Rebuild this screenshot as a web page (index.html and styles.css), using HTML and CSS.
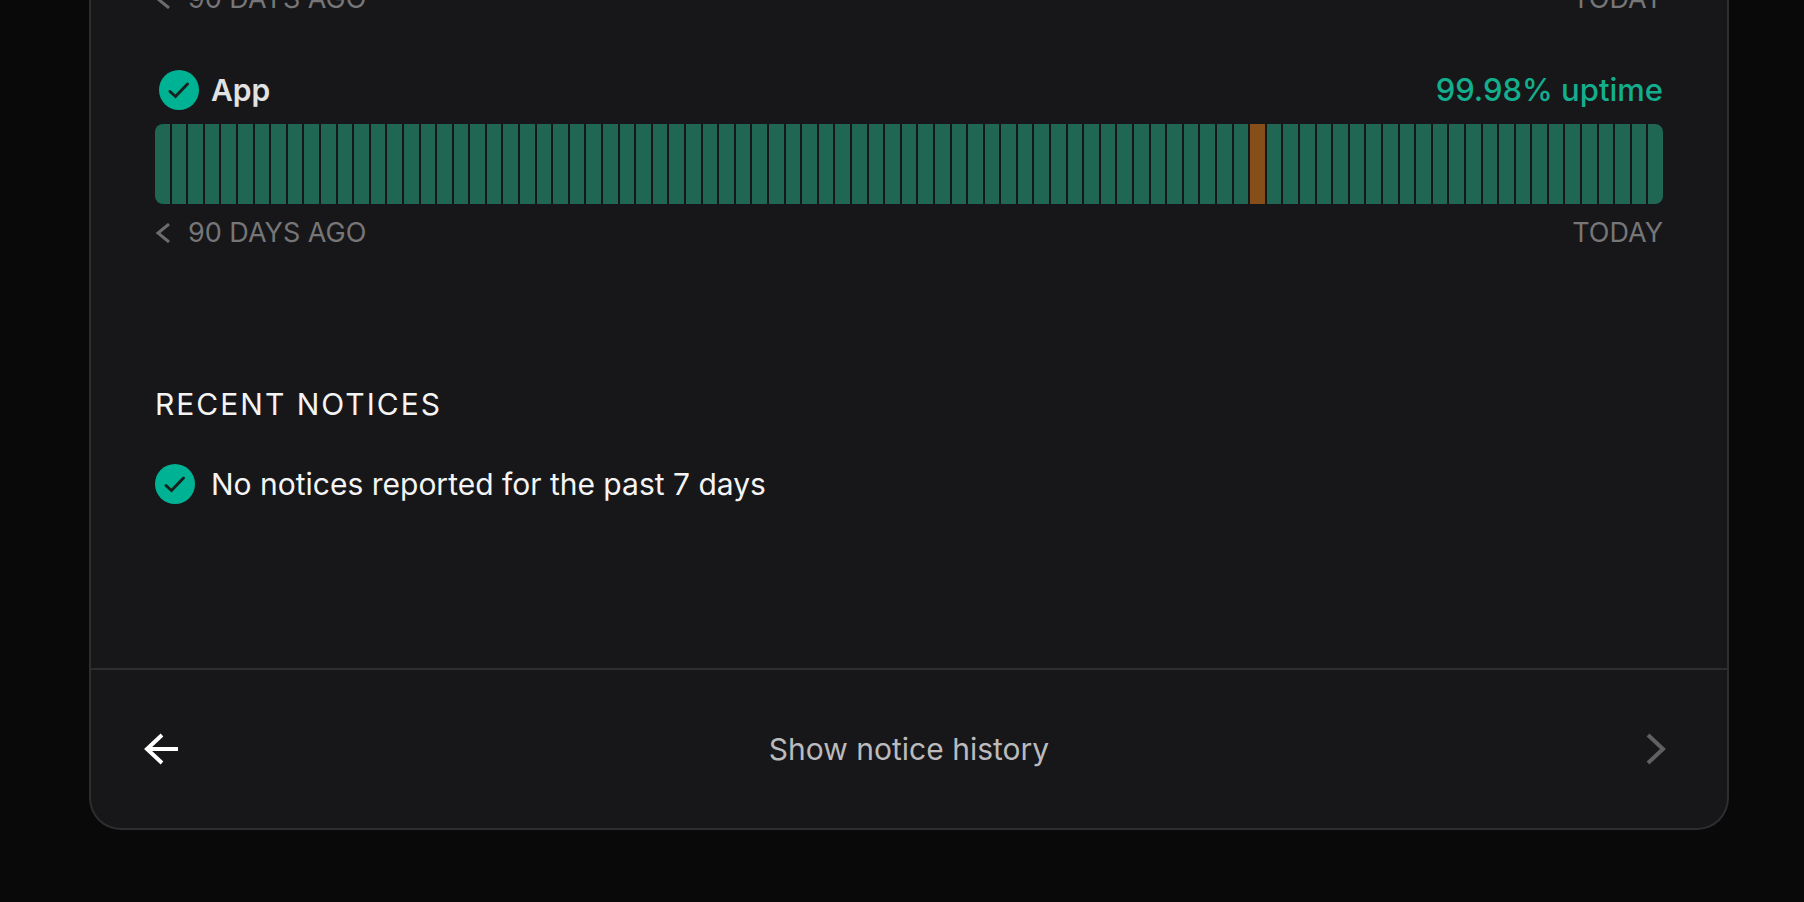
FILE: index.html
```html
<!DOCTYPE html>
<html lang="en">
<head>
    <meta charset="UTF-8">
    <meta name="viewport" content="width=device-width, initial-scale=1.0">
    <title>System status</title>
    <link rel="stylesheet" href="styles.css">
</head>
<body>
    <main class="panel">
        <div class="panel-body">
            <div class="legend">
                <span class="legend-start">
                    <svg class="legend-icon" viewBox="0 0 16 20" aria-hidden="true"><path d="M14 1 3 10l11 9"/></svg>
                    90 DAYS AGO
                </span>
                <span>TODAY</span>
            </div>

            <section class="component">
                <div class="component-header">
                    <svg class="status-icon" viewBox="0 0 40 40" aria-hidden="true"><circle cx="20" cy="20" r="20"/><path d="m11 21.500 5.500 5L28.500 14"/></svg>
                    <h2 class="component-name">App</h2>
                    <span class="uptime">99.98% uptime</span>
                </div>
                <div class="bars" id="app-bars"></div>
                <div class="legend">
                    <span class="legend-start">
                        <svg class="legend-icon" viewBox="0 0 16 20" aria-hidden="true"><path d="M14 1 3 10l11 9"/></svg>
                        90 DAYS AGO
                    </span>
                    <span>TODAY</span>
                </div>
            </section>

            <section class="notices">
                <h2 class="notices-title">RECENT NOTICES</h2>
                <p class="notice">
                    <svg class="status-icon" viewBox="0 0 40 40" aria-hidden="true"><circle cx="20" cy="20" r="20"/><path d="m11 21.500 5.500 5L28.500 14"/></svg>
                    No notices reported for the past 7 days
                </p>
            </section>
        </div>

        <footer class="panel-footer">
            <button class="nav-button" type="button" aria-label="Back">
                <svg class="arrow" viewBox="0 0 36 32" aria-hidden="true"><path d="M19 2 4 16l15 14M4 16h31"/></svg>
            </button>
            <a class="history-link" href="#history">Show notice history</a>
            <button class="nav-button next" type="button" aria-label="Next">
                <svg class="chevron" viewBox="0 0 20 32" aria-hidden="true"><path d="M2 2 17 16 2 30"/></svg>
            </button>
        </footer>
    </main>

    <script>
        // One bar per day, oldest first
        const days = 91;
        const degraded = [66];
        const bars = document.getElementById('app-bars');

        for (let i = 0; i < days; i++) {
            const bar = document.createElement('div');
            bar.className = degraded.includes(i) ? 'bar degraded' : 'bar';
            bars.appendChild(bar);
        }
    </script>
</body>
</html>
```
FILE: styles.css
```css
* {
    box-sizing: border-box;
}
body {
    margin: 0;
    padding: 0 75px 72px 89px;
    overflow: hidden;
    background: #09090a;
    color: #f4f4f5;
    font-family: Inter, sans-serif;
    font-size: 30px;
    line-height: 44px;
}
h2, p {
    margin: 0;
    font-size: 30px;
}
.panel {
    margin-top: -18px;
    background: #171719;
    border: 2px solid #2e2e30;
    border-top: 0;
    border-radius: 0 0 32px 32px;
}
.panel-body {
    padding: 0 64px 162px;
}
.legend {
    display: flex;
    justify-content: space-between;
    color: #767678;
    font-size: 27px;
    line-height: 34px;
}
.legend-start {
    display: flex;
    align-items: center;
    gap: 17px;
}
.legend-icon {
    width: 16px;
    height: 20px;
    fill: none;
    stroke: #6c6c6e;
    stroke-width: 3;
}
.component {
    margin-top: 52px;
}
.component-header {
    display: flex;
    align-items: center;
    gap: 12px;
    padding-left: 4px;
    margin-bottom: 12px;
}
.status-icon {
    flex: none;
    width: 40px;
    height: 40px;
    fill: #00b294;
}
.status-icon path {
    fill: none;
    stroke: #17221f;
    stroke-width: 3;
    stroke-linecap: round;
}
.component-name {
    color: #e2e2e3;
    font-weight: 600;
}
.uptime {
    margin-left: auto;
    color: #13ae8d;
    font-size: 31px;
    font-weight: 500;
}
.bars {
    display: flex;
    gap: 2px;
    height: 80px;
    margin-bottom: 12px;
    border-radius: 8px;
    overflow: hidden;
}
.bar {
    flex: 1;
    background: #1f6653;
}
.bar.degraded {
    background: #864e19;
}
.notices {
    margin-top: 132px;
}
.notices-title {
    font-weight: 400;
    letter-spacing: 2px;
}
.notice {
    display: flex;
    align-items: center;
    gap: 16px;
    margin-top: 36px;
}
.panel-footer {
    display: flex;
    align-items: center;
    justify-content: space-between;
    height: 160px;
    padding: 0 52px;
    border-top: 2px solid #2e2e30;
}
.nav-button {
    display: flex;
    width: 36px;
    padding: 0;
    border: 0;
    background: none;
    color: #fff;
    cursor: pointer;
}
.nav-button.next {
    justify-content: flex-end;
    padding-right: 9px;
    color: #606063;
}
.nav-button svg {
    flex: none;
    height: 32px;
    fill: none;
    stroke: currentColor;
    stroke-width: 4;
}
.arrow {
    width: 36px;
}
.chevron {
    width: 20px;
}
.history-link {
    color: #bbbabd;
    text-decoration: none;
}
```
